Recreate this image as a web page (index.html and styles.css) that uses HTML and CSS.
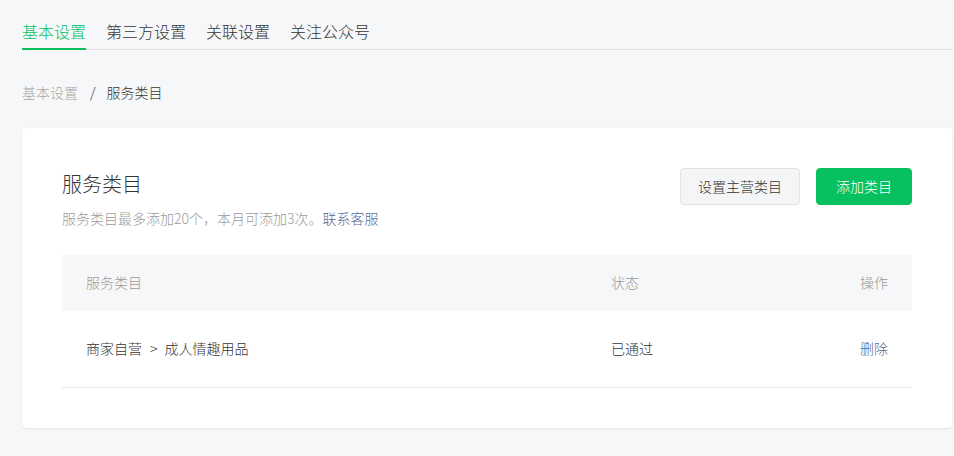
FILE: index.html
```html
<!DOCTYPE html>
<html lang="zh-CN">
<head>
<meta charset="utf-8">
<title>服务类目</title>
<link rel="stylesheet" href="styles.css">
</head>
<body>
<div class="page">
  <nav class="tabs">
    <a class="tab active">基本设置</a>
    <a class="tab">第三方设置</a>
    <a class="tab">关联设置</a>
    <a class="tab">关注公众号</a>
  </nav>
  <div class="crumbs">
    <span class="crumb-prev">基本设置</span>
    <span class="crumb-sep">/</span>
    <span class="crumb-cur">服务类目</span>
  </div>
  <section class="card">
    <div class="card-head">
      <div class="head-text">
        <h2 class="title">服务类目</h2>
        <p class="desc">服务类目最多添加20个，本月可添加3次。<a class="link">联系客服</a></p>
      </div>
      <div class="actions">
        <button class="btn btn-default">设置主营类目</button>
        <button class="btn btn-primary">添加类目</button>
      </div>
    </div>
    <div class="table">
      <div class="row row-head">
        <div class="cell">服务类目</div>
        <div class="cell">状态</div>
        <div class="cell cell-right">操作</div>
      </div>
      <div class="row row-body">
        <div class="cell">商家自营<span class="arrow">&gt;</span>成人情趣用品</div>
        <div class="cell">已通过</div>
        <div class="cell cell-right"><a class="link">删除</a></div>
      </div>
    </div>
  </section>
</div>
</body>
</html>
```
FILE: styles.css
```css
* { box-sizing: border-box; }
html, body { margin: 0; padding: 0; }
body {
  background: #f6f7f9;
  font-family: "Noto Sans CJK SC", "Noto Sans", "Liberation Sans", sans-serif;
  font-weight: 300;
  color: #353535;
  width: 954px;
  height: 456px;
  overflow: hidden;
}
.page { padding: 0 2px 0 22px; }
.tabs {
  display: flex;
  gap: 20px;
  padding-top: 19px;
  border-bottom: 1px solid #e3e4e6;
}
.tab {
  font-size: 16px;
  line-height: 24px;
  padding-bottom: 5px;
  border-bottom: 2px solid transparent;
  margin-bottom: -1px;
  color: #353535;
}
.tab.active { color: #07c160; border-bottom-color: #07c160; }
.crumbs {
  margin-top: 32px;
  padding-bottom: 1px;
  font-size: 14px;
  line-height: 20px;
  display: flex;
}
.crumb-prev { color: #a6a6a6; }
.crumb-sep { color: #353535; margin: 0 11px 0 12px; }
.crumb-cur { color: #353535; }
.card {
  margin-top: 25px;
  background: #fff;
  border-radius: 4px;
  box-shadow: 0 1px 2px rgba(0,0,0,0.08);
  padding: 40px;
}
.card-head { display: flex; justify-content: space-between; align-items: flex-start; }
.title {
  margin: 0;
  font-size: 20px;
  line-height: 32px;
  font-weight: 300;
  color: #353535;
}
.desc {
  margin: 8px 0 0;
  font-size: 14px;
  line-height: 20px;
  color: #9a9a9a;
}
.link { color: #576b95; cursor: pointer; }
.actions { display: flex; gap: 16px; }
.btn {
  font-family: inherit;
  font-weight: 300;
  font-size: 14px;
  height: 37px;
  border-radius: 4px;
  padding: 0 17px 1px;
  cursor: pointer;
}
.btn-default {
  background: #f4f5f7;
  border: 1px solid #e1e2e4;
  color: #353535;
}
.btn-primary {
  background: #07c160;
  border: 1px solid #07c160;
  color: #fff;
  padding: 0 19px 1px;
}
.table { margin-top: 27px; }
.row {
  display: grid;
  grid-template-columns: 525px 1fr auto;
  align-items: center;
  padding: 0 24px 2px;
  font-size: 14px;
}
.row-head {
  height: 56px;
  background: #f6f7f9;
  color: #9a9a9a;
}
.row-body {
  height: 77px;
  border-bottom: 1px solid #e7e7e7;
  color: #353535;
}
.cell-right { text-align: right; }
.arrow { margin: 0 7px 0 8px; }
```
